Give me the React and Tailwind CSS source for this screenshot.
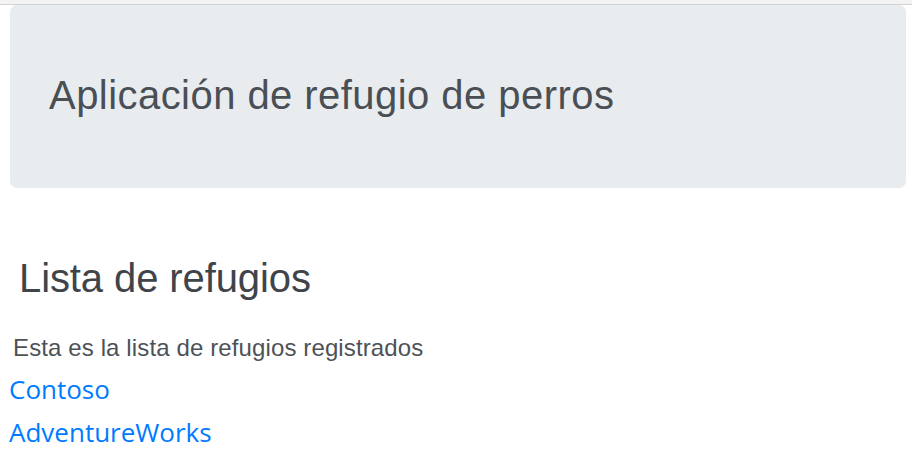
import React from "react";

const shelters = ["Contoso", "AdventureWorks"];

const App = () => {
  return (
    <div className="w-[912px] h-[460px] overflow-hidden bg-white font-['Liberation_Sans',Arial,sans-serif]">
      {/* franja superior del navegador */}
      <div className="h-[5px] bg-[#f3f3f3] border-b border-[#d2d2d2]" />

      {/* jumbotron */}
      <div className="ml-[10px] mr-[6px] h-[183px] rounded-[7px] bg-[#e9ecef] pl-[39px] pt-[66px]">
        <h1 className="text-[40px] leading-[48px] tracking-[0.45px] text-[#494f55]">
          Aplicación de refugio de perros
        </h1>
      </div>

      <div className="pl-[19px] pt-[66px]">
        <h2 className="text-[40px] leading-[48px] tracking-[-0.1px] text-[#3f444a]">
          Lista de refugios
        </h2>
      </div>

      <p className="pl-[13px] mt-[28px] text-[24px] leading-[36px] tracking-[0.12px] text-[#4d5258]">
        Esta es la lista de refugios registrados
      </p>

      <div className="pl-[9px] mt-[2px] flex flex-col">
        {shelters.map((name) => (
          <a
            key={name}
            href="#"
            className="font-['Open_Sans',sans-serif] text-[26px] leading-[43px] text-[#007bff]"
          >
            {name}
          </a>
        ))}
      </div>
    </div>
  );
};

export default App;
